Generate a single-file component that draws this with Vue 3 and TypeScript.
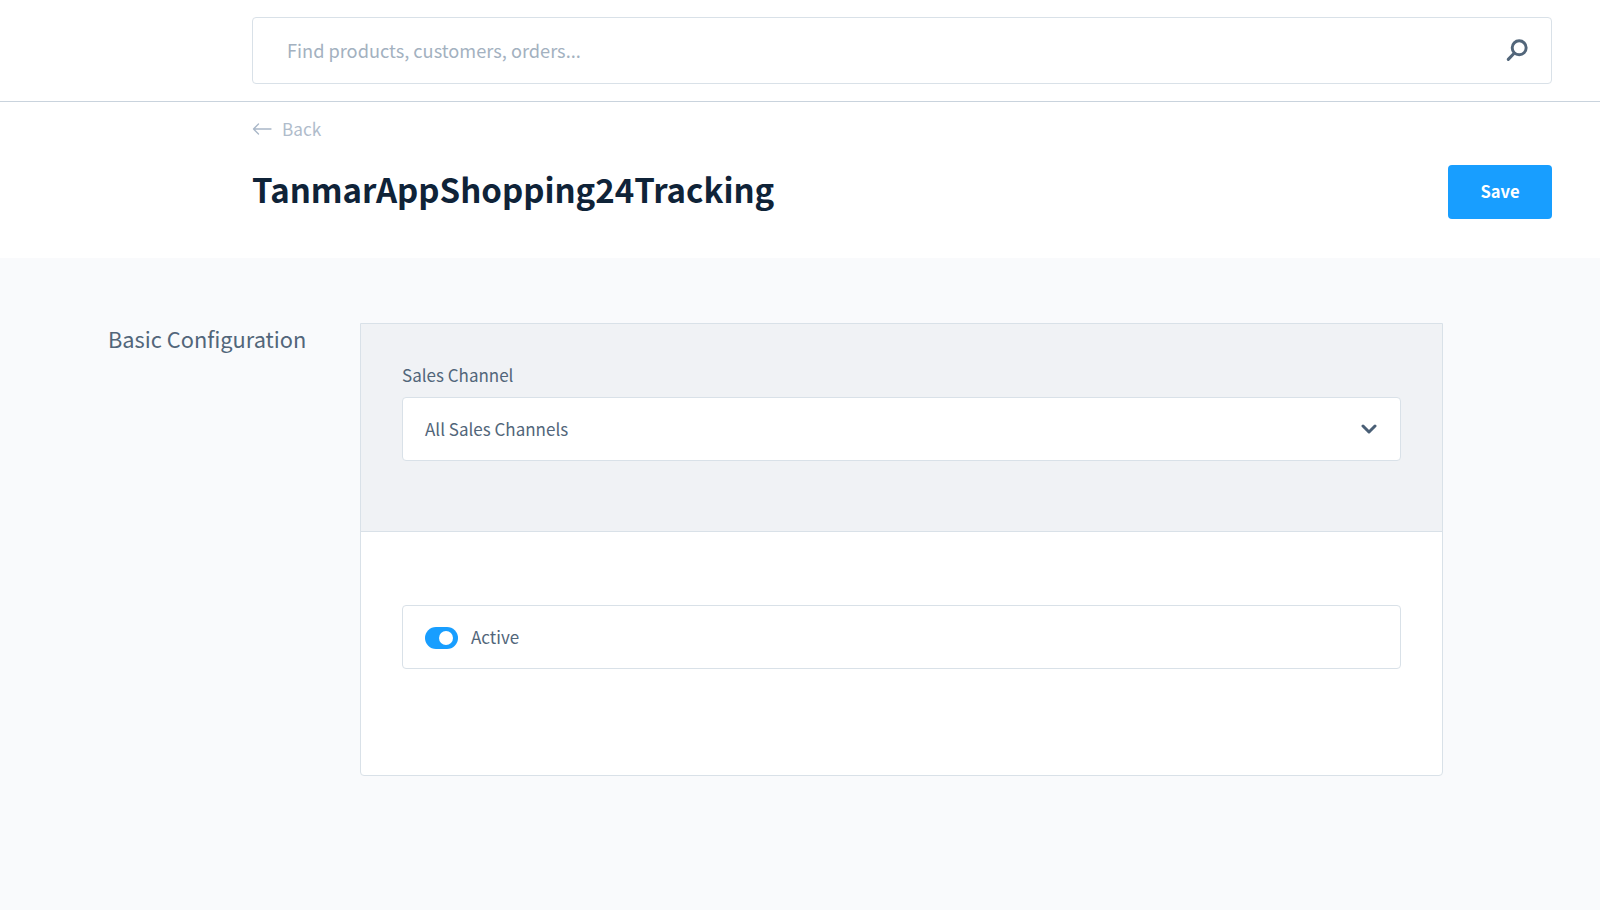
<template>
  <div class="page">
    <header class="topbar">
      <div class="search">
        <span class="search-text">Find products, customers, orders...</span>
        <svg class="search-icon" width="24" height="24" viewBox="0 0 22 22" fill="none">
          <circle cx="13" cy="9" r="6.4" stroke="#52667a" stroke-width="2.7" />
          <path d="M8.4 14 3 19.6" stroke="#52667a" stroke-width="2.8" stroke-linecap="round" />
        </svg>
      </div>
    </header>

    <section class="head">
      <a class="back">
        <svg width="20" height="12" viewBox="0 0 20 12" fill="none">
          <path d="M19 6H1.5M6.5 1 1.5 6l5 5" stroke="#a9b7c8" stroke-width="1.3" stroke-linecap="round" stroke-linejoin="round" />
        </svg>
        <span>Back</span>
      </a>
      <div class="title-row">
        <h1>TanmarAppShopping24Tracking</h1>
        <button class="save" type="button">Save</button>
      </div>
    </section>

    <main class="content">
      <h2>Basic Configuration</h2>
      <div class="card">
        <div class="card-top">
          <label>Sales Channel</label>
          <div class="select">
            <span class="value">{{ salesChannel }}</span>
            <svg width="16" height="10" viewBox="0 0 16 10" fill="none">
              <path d="M2 2l6 6 6-6" stroke="#4a5f76" stroke-width="3" stroke-linecap="round" stroke-linejoin="round" />
            </svg>
          </div>
        </div>
        <div class="card-bottom">
          <div class="toggle-box">
            <span class="switch" :class="{ on: active }" @click="active = !active"></span>
            <span class="value">Active</span>
          </div>
        </div>
      </div>
    </main>
  </div>
</template>

<script setup lang="ts">
import { ref } from 'vue'

const salesChannel = ref('All Sales Channels')
const active = ref(true)
</script>

<style scoped>
.page {
  height: 910px;
  display: flex;
  flex-direction: column;
  background: #f9fafc;
  font-family: "Noto Sans CJK SC", "Noto Sans", sans-serif;
  color: #52667a;
  overflow: hidden;
}

.topbar {
  height: 102px;
  box-sizing: border-box;
  padding: 17px 48px 0 252px;
  background: #fff;
  border-bottom: 1px solid #c9d3dd;
  box-shadow: 0 1px 1px #e4e9ee;
}

.search {
  height: 67px;
  box-sizing: border-box;
  display: flex;
  align-items: center;
  justify-content: space-between;
  padding: 0 22px 2px 34px;
  border: 1px solid #d9e1e8;
  border-radius: 4px;
  background: #fff;
}

.search-text {
  font-size: 18.2px;
  line-height: 26px;
  color: #a3b1c0;
}

.head {
  height: 156px;
  box-sizing: border-box;
  padding: 0 48px 0 252px;
  background: #fff;
}

.back {
  display: flex;
  align-items: center;
  gap: 10px;
  height: 26px;
  margin-top: 14px;
  font-size: 17.2px;
  line-height: 26px;
  color: #b0bccb;
}

.title-row {
  display: flex;
  align-items: center;
  justify-content: space-between;
  margin-top: 23px;
}

h1 {
  margin: 0 0 6px;
  font-size: 33px;
  line-height: 46px;
  font-weight: 600;
  color: #0f2338;
}

.save {
  width: 104px;
  height: 54px;
  padding: 0 0 2px;
  border: 0;
  border-radius: 4px;
  background: #189eff;
  color: #fff;
  font-family: inherit;
  font-size: 16.6px;
  font-weight: 600;
}

.content {
  display: flex;
  align-items: flex-start;
  padding: 65px 0 0 108px;
}

h2 {
  width: 252px;
  flex-shrink: 0;
  margin: 0;
  font-size: 21.8px;
  line-height: 32px;
  font-weight: 400;
}

.card {
  width: 1083px;
  box-sizing: border-box;
  height: 453px;
  border: 1px solid #d9e1e8;
  border-radius: 0 0 4px 4px;
  background: #fff;
}

.card-top {
  height: 208px;
  box-sizing: border-box;
  padding: 38px 41px 0;
  background: #f0f2f5;
  border-bottom: 1px solid #d9e1e8;
}

label {
  display: block;
  height: 35px;
  font-size: 17px;
  line-height: 26px;
}

.select {
  height: 64px;
  box-sizing: border-box;
  display: flex;
  align-items: center;
  justify-content: space-between;
  padding: 0 23px 0 22px;
  border: 1px solid #d9e1e8;
  border-radius: 4px;
  background: #fff;
  font-size: 17px;
}

.value {
  margin-bottom: 2px;
}

.card-bottom {
  padding: 73px 41px 0;
}

.toggle-box {
  height: 64px;
  box-sizing: border-box;
  display: flex;
  align-items: center;
  gap: 13px;
  padding-left: 22px;
  border: 1px solid #d9e1e8;
  border-radius: 4px;
  font-size: 17px;
}

.switch {
  position: relative;
  width: 33px;
  height: 22px;
  margin-top: 1px;
  border-radius: 11px;
  background: #d9e1e8;
}

.switch.on {
  background: #189eff;
}

.switch::after {
  content: '';
  position: absolute;
  top: 4px;
  left: 4px;
  width: 14px;
  height: 14px;
  border-radius: 50%;
  background: #fff;
}

.switch.on::after {
  left: 14px;
}
</style>
